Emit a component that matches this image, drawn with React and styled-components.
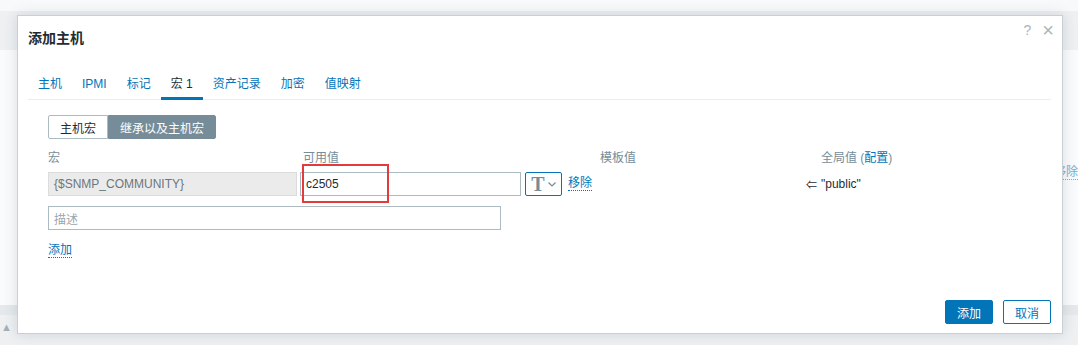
import styled, { createGlobalStyle } from "styled-components";

const GlobalStyle = createGlobalStyle`
  html, body {
    margin: 0;
    padding: 0;
  }
  body {
    width: 1078px;
    height: 345px;
    overflow: hidden;
    font-family: "Liberation Sans", Arial, "Noto Sans CJK SC", sans-serif;
    font-size: 12px;
    color: #1f2c33;
    background: #eceff1;
  }
`;

const Page = styled.div`
  position: relative;
  width: 1078px;
  height: 345px;
  display: flex;
  flex-direction: column;
`;

const TopBand = styled.div`
  height: 11px;
  background: #f8f9fa;
`;

const NavBand = styled.div`
  height: 39px;
  background: #eef0f2;
`;

const PagePanel = styled.div`
  height: 255px;
  background: #fafbfc;
  display: flex;
  justify-content: flex-end;
  align-items: flex-start;
  padding-top: 115px;
  box-sizing: border-box;
`;

const PageLink = styled.span`
  color: #6fb0d8;
  border-bottom: 1px dotted #6fb0d8;
  line-height: 14px;
`;

const PageRule = styled.div`
  height: 10px;
  background: #e5e9ec;
`;

const PageFoot = styled.div`
  flex: 1;
  background: #eef0f2;
  padding: 6px 0 0 1px;
  color: #a4b0b8;
  font-size: 11px;
`;

const Dialog = styled.div`
  position: absolute;
  left: 17px;
  top: 15px;
  width: 1046px;
  height: 319px;
  box-sizing: border-box;
  background: #fff;
  border: 1px solid #c8d0d6;
  box-shadow: 0 0 12px rgba(60, 80, 95, 0.18);
  display: flex;
  flex-direction: column;
  padding: 0 11px 9px 10px;
`;

const Header = styled.div`
  display: flex;
  align-items: flex-start;
  justify-content: space-between;
  height: 51px;
  padding-top: 14px;
  box-sizing: border-box;
`;

const Title = styled.h4`
  margin: 0;
  font-size: 14px;
  font-weight: bold;
  line-height: 17px;
  color: #1f2c33;
`;

const HeaderIcons = styled.div`
  display: flex;
  gap: 11px;
  margin-top: -7px;
  margin-right: -3px;
  color: #aab6bd;
  font-size: 14px;
  line-height: 14px;
`;

const CloseIcon = styled.span`
  font-size: 20px;
  line-height: 14px;
`;

const TabBar = styled.div`
  display: flex;
  border-bottom: 1px solid #ebeef0;
`;

const Tab = styled.span`
  padding: 9px 10px 5px;
  line-height: 16px;
  color: ${(p) => (p.$active ? "#1f2c33" : "#0275b8")};
  border-bottom: 3px solid ${(p) => (p.$active ? "#0275b8" : "transparent")};
  margin-bottom: -1px;
`;

const TabBody = styled.div`
  flex: 1;
  padding: 15px 20px 0;
`;

const Segmented = styled.div`
  display: inline-flex;
  height: 24px;
`;

const Segment = styled.span`
  display: flex;
  align-items: center;
  padding: 0 11px;
  box-sizing: border-box;
  border: 1px solid ${(p) => (p.$on ? "#768d99" : "#acbbc2")};
  border-radius: ${(p) => (p.$first ? "2px 0 0 2px" : "0 2px 2px 0")};
  background: ${(p) => (p.$on ? "#768d99" : "#fff")};
  color: ${(p) => (p.$on ? "#fff" : "#1f2c33")};
`;

const MacroGrid = styled.div`
  display: grid;
  grid-template-columns: 252px 300px 221px 1fr;
  margin-top: 11px;
  align-items: center;
`;

const HeadCell = styled.div`
  color: #768d99;
  line-height: 16px;
  padding-bottom: 6px;
  padding-left: ${(p) => p.$pad || 0}px;
`;

const Link = styled.span`
  color: #0275b8;
  border-bottom: 1px dotted #0275b8;
  line-height: 13px;
`;

const PlainLink = styled.span`
  color: #0275b8;
`;

const ReadonlyInput = styled.div`
  width: 249px;
  height: 24px;
  box-sizing: border-box;
  background: #ebebeb;
  border: 1px solid #dcdcdc;
  color: #6b767d;
  padding: 0 5px;
  display: flex;
  align-items: center;
`;

const ValueCell = styled.div`
  position: relative;
  display: flex;
  align-items: center;
  gap: 4px;
`;

const TextInput = styled.div`
  width: ${(p) => p.$w}px;
  height: ${(p) => p.$h || 24}px;
  box-sizing: border-box;
  border: 1px solid #acbbc2;
  background: #fff;
  color: ${(p) => (p.$placeholder ? "#9aa6ad" : "#1f2c33")};
  padding: 0 5px;
  display: flex;
  align-items: center;
`;

const TypeButton = styled.div`
  width: 37px;
  height: 24px;
  box-sizing: border-box;
  border: 1px solid #0275b8;
  border-radius: 2px;
  display: flex;
  align-items: center;
  justify-content: center;
  gap: 3px;
  color: #768d99;
  font-family: "Liberation Serif", "Times New Roman", serif;
  font-weight: bold;
  font-size: 20px;
`;

const RemoveLink = styled(Link)`
  margin-left: 2px;
`;

const Highlight = styled.div`
  position: absolute;
  left: 2px;
  top: -8px;
  width: 87px;
  height: 39px;
  box-sizing: border-box;
  border: 2px solid #e23b3b;
`;

const InheritCell = styled.div`
  text-align: right;
  padding-right: 4px;
  color: #1f2c33;
  font-size: 11px;
`;

const GlobalValue = styled.div`
  color: #1f2c33;
`;

const DescRow = styled.div`
  margin-top: 10px;
`;

const AddRow = styled.div`
  margin-top: 13px;
`;

const Footer = styled.div`
  display: flex;
  justify-content: flex-end;
  gap: 10px;
`;

const Button = styled.button`
  height: 24px;
  padding: 0 11px;
  font: inherit;
  border-radius: 2px;
  border: 1px solid #0275b8;
  background: ${(p) => (p.$primary ? "#0275b8" : "#fff")};
  color: ${(p) => (p.$primary ? "#fff" : "#0275b8")};
`;

const Chevron = () => (
  <svg width="8" height="5" viewBox="0 0 8 5">
    <path d="M0.5 0.5 L4 4 L7.5 0.5" fill="none" stroke="#768d99" strokeWidth="1.2" />
  </svg>
);

export default function App() {
  return (
    <>
      <GlobalStyle />
      <Page>
        <TopBand />
        <NavBand />
        <PagePanel>
          <PageLink>移除</PageLink>
        </PagePanel>
        <PageRule />
        <PageFoot>▲</PageFoot>

        <Dialog>
          <Header>
            <Title>添加主机</Title>
            <HeaderIcons>
              <span>?</span>
              <CloseIcon>×</CloseIcon>
            </HeaderIcons>
          </Header>

          <TabBar>
            <Tab>主机</Tab>
            <Tab>IPMI</Tab>
            <Tab>标记</Tab>
            <Tab $active>宏 1</Tab>
            <Tab>资产记录</Tab>
            <Tab>加密</Tab>
            <Tab>值映射</Tab>
          </TabBar>

          <TabBody>
            <Segmented>
              <Segment $first>主机宏</Segment>
              <Segment $on>继承以及主机宏</Segment>
            </Segmented>

            <MacroGrid>
              <HeadCell>宏</HeadCell>
              <HeadCell $pad={3}>可用值</HeadCell>
              <HeadCell>模板值</HeadCell>
              <HeadCell>
                全局值 (<PlainLink>配置</PlainLink>)
              </HeadCell>

              <ReadonlyInput>{"{$SNMP_COMMUNITY}"}</ReadonlyInput>
              <ValueCell>
                <TextInput $w={221}>c2505</TextInput>
                <TypeButton>
                  T<Chevron />
                </TypeButton>
                <RemoveLink>移除</RemoveLink>
                <Highlight />
              </ValueCell>
              <InheritCell>⇐</InheritCell>
              <GlobalValue>"public"</GlobalValue>
            </MacroGrid>

            <DescRow>
              <TextInput $w={453} $h={24} $placeholder>
                描述
              </TextInput>
            </DescRow>

            <AddRow>
              <Link>添加</Link>
            </AddRow>
          </TabBody>

          <Footer>
            <Button $primary>添加</Button>
            <Button>取消</Button>
          </Footer>
        </Dialog>
      </Page>
    </>
  );
}
